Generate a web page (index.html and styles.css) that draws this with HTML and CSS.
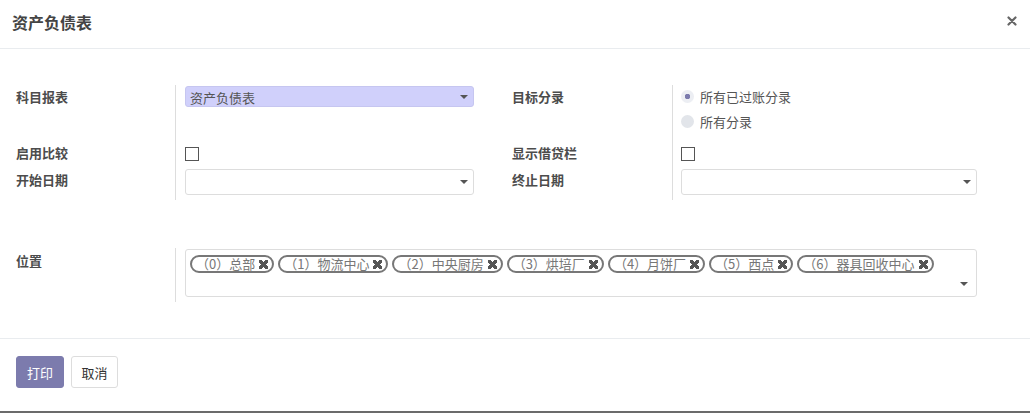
FILE: index.html
```html
<!DOCTYPE html>
<html lang="zh-CN">
<head>
    <meta charset="UTF-8">
    <title>资产负债表</title>
    <link rel="stylesheet" href="styles.css">
</head>
<body>
    <div class="modal">
        <div class="modal-header">
            <h4 class="modal-title">资产负债表</h4>
            <button class="close" type="button">
                <svg width="10" height="10" viewBox="0 0 10 10"><path d="M1.5 1.5 L8.5 8.5 M8.5 1.5 L1.5 8.5" stroke="#666" stroke-width="2.2" stroke-linecap="round"/></svg>
            </button>
        </div>

        <div class="modal-body">
            <!-- main options -->
            <div class="form-grid">
                <div class="lbl row1">科目报表</div>
                <div class="cell row1">
                    <div class="select filled">资产负债表<span class="caret"></span></div>
                </div>
                <div class="lbl lbl-right row1">目标分录</div>
                <div class="cell row1">
                    <div class="radio checked">所有已过账分录</div>
                    <div class="radio">所有分录</div>
                </div>

                <div class="lbl row2">启用比较</div>
                <div class="cell row2"><span class="checkbox"></span></div>
                <div class="lbl lbl-right row2">显示借贷栏</div>
                <div class="cell row2 right-col"><span class="checkbox"></span></div>

                <div class="lbl row3">开始日期</div>
                <div class="cell row3"><div class="select date"><span class="caret"></span></div></div>
                <div class="lbl lbl-right row3">终止日期</div>
                <div class="cell row3 right-col"><div class="select date right"><span class="caret"></span></div></div>
            </div>

            <!-- locations -->
            <div class="form-grid loc">
                <div class="lbl">位置</div>
                <div class="cell">
                    <div class="tags-box">
                        <div class="tags">
                            <span class="tag">（0）总部<i class="x"></i></span>
                            <span class="tag">（1）物流中心<i class="x"></i></span>
                            <span class="tag">（2）中央厨房<i class="x"></i></span>
                            <span class="tag">（3）烘培厂<i class="x"></i></span>
                            <span class="tag">（4）月饼厂<i class="x"></i></span>
                            <span class="tag">（5）西点<i class="x"></i></span>
                            <span class="tag">（6）器具回收中心<i class="x"></i></span>
                        </div>
                        <span class="caret"></span>
                    </div>
                </div>
            </div>
        </div>

        <div class="modal-footer">
            <button class="btn btn-primary" type="button">打印</button>
            <button class="btn btn-default" type="button">取消</button>
        </div>
    </div>
</body>
</html>
```

FILE: styles.css
```css
* {
    box-sizing: border-box;
    margin: 0;
    padding: 0;
}

html {
    background: #6b6b6b;
}

body {
    font-family: "Noto Sans CJK SC", "Noto Sans", sans-serif;
    font-size: 13px;
    color: #555;
    background: #fff;
    width: 1030px;
    height: 411px;
    overflow: hidden;
}

.modal-header {
    height: 49px;
    padding: 0 12px;
    border-bottom: 1px solid #e9ecef;
    display: flex;
    align-items: center;
    justify-content: space-between;
}

.modal-title {
    font-size: 16px;
    font-weight: bold;
    color: #444;
    margin-top: -4px;
}

.close {
    border: none;
    background: none;
    width: 12px;
    height: 12px;
    margin-top: -7px;
    display: flex;
    align-items: center;
    justify-content: center;
}

.modal-body {
    padding: 36px 16px 0 16px;
    height: 290px;
    border-bottom: 1px solid #e9ecef;
}

.form-grid {
    display: grid;
    grid-template-columns: 159px 321px 176px 1fr;
}

.lbl {
    font-weight: bold;
    color: #4c4c4c;
    line-height: 21px;
}

.lbl-right {
    padding-left: 16px;
}

.cell {
    border-left: 1px solid #ddd;
    padding-left: 9px;
}

.right-col {
    padding-left: 8px;
}

.row1 {
    height: 56px;
    padding-top: 1px;
}

.row2 {
    height: 23px;
}

.row2.lbl {
    line-height: 23px;
}

.row2 .checkbox {
    margin-top: 6px;
}

.row3 {
    height: 36px;
}

.row3.lbl {
    padding-top: 6px;
    line-height: 20px;
}

.select {
    position: relative;
    width: 289px;
    height: 21px;
    line-height: 21px;
    border-radius: 3px;
    padding-left: 4px;
    border: 1px solid #ddd;
    color: #555;
}

.select.filled {
    background: #d0d0fb;
    border-color: #c6c6f0;
}

.select.date {
    height: 26px;
    margin-top: 5px;
}

.select.right {
    width: 296px;
}

.caret {
    position: absolute;
    right: 5px;
    top: 50%;
    margin-top: -2px;
    width: 0;
    height: 0;
    border-left: 4px solid transparent;
    border-right: 4px solid transparent;
    border-top: 4px solid #555;
}

.radio {
    position: relative;
    padding-left: 18px;
    line-height: 25px;
    margin-top: -2px;
    margin-bottom: 2px;
}

.radio::before {
    content: "";
    position: absolute;
    left: -1px;
    top: 6px;
    width: 13px;
    height: 13px;
    border-radius: 50%;
    background: #e2e5ea;
}

.radio.checked::before {
    background: #eceef3 radial-gradient(circle, #7c7bad 0 2.5px, transparent 3px);
}

.checkbox {
    display: block;
    width: 14px;
    height: 14px;
    border: 1px solid #555;
    background: #fff;
}

.loc {
    margin-top: 48px;
}

.loc .lbl {
    padding-top: 2px;
}

.loc .cell {
    padding-top: 1px;
    padding-bottom: 5px;
}

.tags-box {
    position: relative;
    width: 792px;
    height: 48px;
    border: 1px solid #ddd;
    border-radius: 3px;
    padding: 5px 4px;
}

.tags-box .caret {
    top: auto;
    bottom: 10px;
    right: 8px;
}

.tags {
    display: flex;
    gap: 4px;
}

.tag {
    display: inline-flex;
    align-items: center;
    height: 18px;
    border: 2px solid #777;
    border-radius: 10px;
    padding: 0 4px 0 4px;
    font-size: 13px;
    color: #777;
    line-height: 14px;
    white-space: nowrap;
}

.x {
    display: inline-block;
    width: 9px;
    height: 9px;
    margin-left: 4px;
    background:
        linear-gradient(45deg, transparent 38%, #555 38%, #555 62%, transparent 62%),
        linear-gradient(-45deg, transparent 38%, #555 38%, #555 62%, transparent 62%);
}

.modal-footer {
    padding: 17px 16px;
    display: flex;
    gap: 7px;
}

.btn {
    height: 32px;
    padding: 0;
    font-family: inherit;
    font-size: 13px;
    border-radius: 3px;
    cursor: pointer;
    white-space: nowrap;
}

.btn-primary {
    width: 48px;
    background: #7c7bad;
    border: 1px solid #7c7bad;
    color: #fff;
}

.btn-default {
    width: 47px;
    background: #fff;
    border: 1px solid #ddd;
    color: #333;
}
```
